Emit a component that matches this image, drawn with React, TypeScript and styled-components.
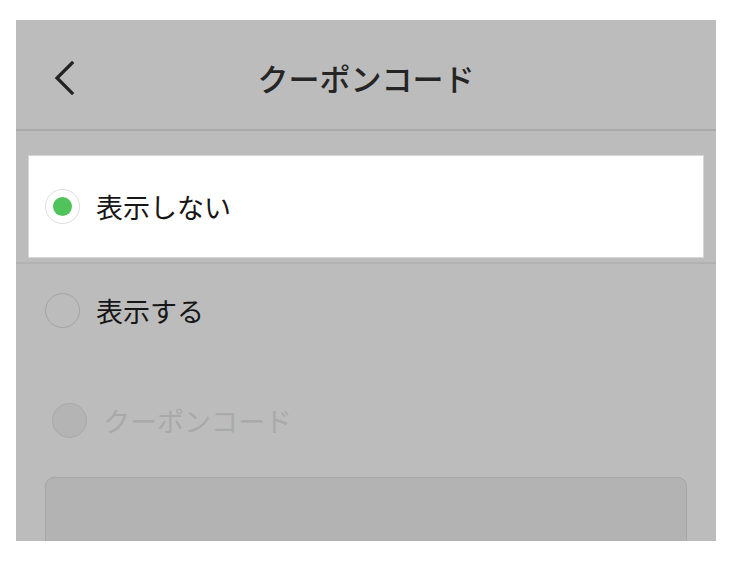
import * as React from 'react';
import styled, { createGlobalStyle } from 'styled-components';

type RadioState = 'checked' | 'unchecked' | 'disabled';

interface Option {
    id: string;
    label: string;
    state: RadioState;
}

const GlobalStyle = createGlobalStyle`
    html, body {
        margin: 0;
        background: #ffffff;
    }
    body {
        font-family: "Noto Sans CJK JP", "Noto Sans", sans-serif;
    }
`;

const Page = styled.div`
    padding: 20px 16px;
`;

const Frame = styled.div`
    width: 700px;
    height: 521px;
    background: #bcbcbc;
    overflow: hidden;
`;

const Header = styled.header`
    height: 111px;
    padding-top: 6px;
    box-sizing: border-box;
    border-bottom: 2px solid #a9a9a9;
    display: grid;
    grid-template-columns: 1fr auto 1fr;
    align-items: center;
`;

const BackButton = styled.button`
    justify-self: start;
    margin-left: 37px;
    width: 24px;
    height: 36px;
    padding: 0;
    border: none;
    background: none;
    display: flex;
    align-items: center;
    justify-content: center;
    color: #222222;
`;

const Title = styled.h1`
    margin: 0;
    font-size: 31px;
    font-weight: 500;
    color: #252525;
    letter-spacing: 0;
`;

const Highlight = styled.div`
    margin-top: 25px;
    padding-bottom: 5px;
    border-bottom: 2px solid #b2b2b2;
`;

const SelectedCard = styled.div`
    margin: 0 13px;
    height: 101px;
    background: #ffffff;
    box-shadow: 0 0 0 1px #d6d6d6;
    display: flex;
    align-items: center;
    padding-left: 16px;
    gap: 16px;
`;

const Row = styled.div<{ indent: number; offset: number }>`
    height: 92px;
    margin-top: ${p => p.offset}px;
    padding-left: ${p => p.indent}px;
    display: flex;
    align-items: center;
    gap: 16px;
`;

const Radio = styled.span<{ state: RadioState }>`
    width: 35px;
    height: 35px;
    box-sizing: border-box;
    border-radius: 50%;
    flex-shrink: 0;
    display: flex;
    align-items: center;
    justify-content: center;
    ${p =>
        p.state === 'checked'
            ? `
            background: #ffffff;
            border: 1.5px solid #dedede;`
            : p.state === 'disabled'
            ? `
            background: #b4b4b4;
            border: 1.5px solid #a9a9a9;`
            : `
            background: transparent;
            border: 1.5px solid #a4a4a4;`}
`;

const Dot = styled.span`
    width: 19px;
    height: 19px;
    border-radius: 50%;
    background: #50c35b;
`;

const Label = styled.span<{ state: RadioState }>`
    font-size: 27px;
    color: ${p => (p.state === 'disabled' ? '#a9a9a9' : '#161616')};
    line-height: 1;
`;

const CodeInput = styled.div`
    margin: 11px 29px 0;
    height: 110px;
    background: #b3b3b3;
    border: 1.5px solid #a6a6a6;
    border-radius: 9px;
`;

const Chevron = () => (
    <svg width="22" height="34" viewBox="0 0 22 34" fill="none">
        <path d="M18 2 L3 17 L18 32" stroke="currentColor" strokeWidth="3.2" strokeLinecap="square" />
    </svg>
);

const options: Option[] = [
    { id: 'hide', label: '表示しない', state: 'checked' },
    { id: 'show', label: '表示する', state: 'unchecked' },
    { id: 'code', label: 'クーポンコード', state: 'disabled' },
];

const RadioItem: React.FC<{ option: Option }> = ({ option }) => (
    <>
        <Radio state={option.state}>{option.state === 'checked' && <Dot />}</Radio>
        <Label state={option.state}>{option.label}</Label>
    </>
);

const App: React.FC = () => {
    const [selected, show, code] = options;

    return (
        <Page>
            <GlobalStyle />
            <Frame>
                <Header>
                    <BackButton aria-label="戻る">
                        <Chevron />
                    </BackButton>
                    <Title>クーポンコード</Title>
                    <span />
                </Header>
                <Highlight>
                    <SelectedCard>
                        <RadioItem option={selected} />
                    </SelectedCard>
                </Highlight>
                <Row indent={29} offset={0}>
                    <RadioItem option={show} />
                </Row>
                <Row indent={36} offset={18}>
                    <RadioItem option={code} />
                </Row>
                <CodeInput />
            </Frame>
        </Page>
    );
};

export default App;
